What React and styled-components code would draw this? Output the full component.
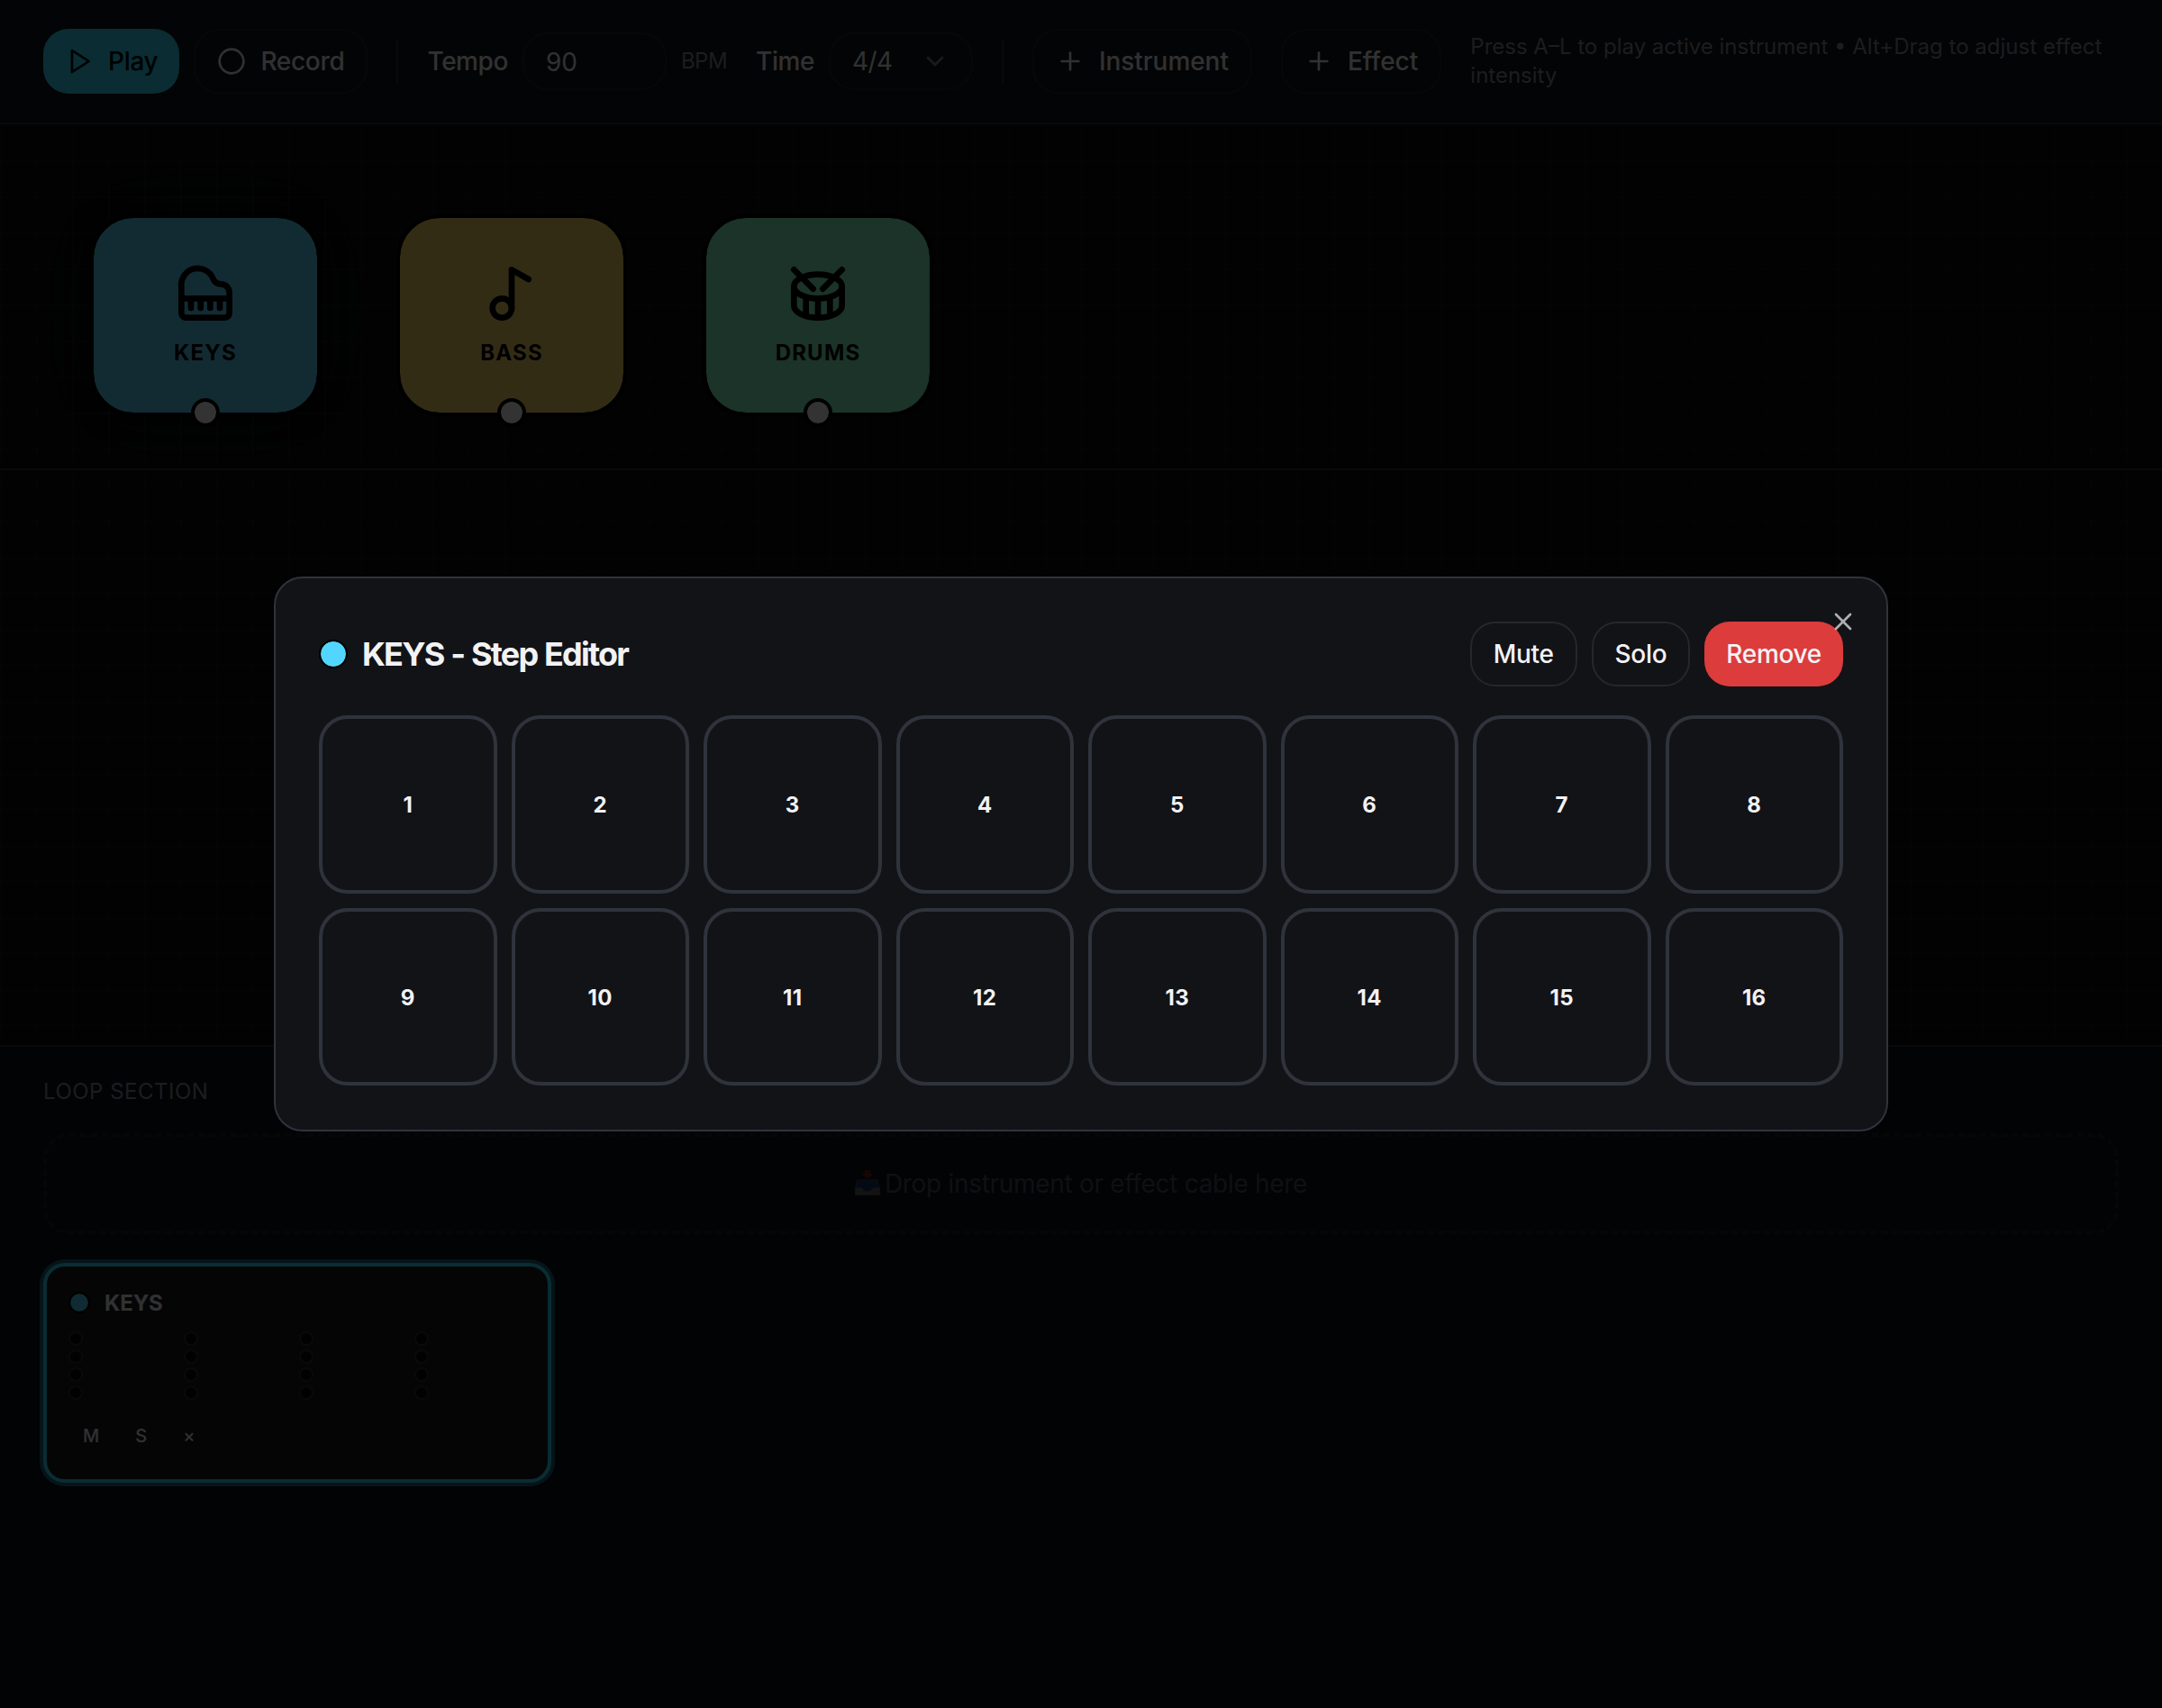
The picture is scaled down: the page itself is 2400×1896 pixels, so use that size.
import React from 'react';
import styled, { createGlobalStyle, css } from 'styled-components';

const GlobalStyle = createGlobalStyle`
  *, *::before, *::after { box-sizing: border-box; }
  html, body { margin: 0; padding: 0; background: #000; }
  body {
    font-family: Inter, 'Liberation Sans', sans-serif;
    font-size: 28px;
    line-height: 40px;
    color: #f2f2f4;
  }
  button, input { font-family: inherit; }
`;

const Page = styled.div`
  position: relative;
  width: 2400px;
  height: 1896px;
  overflow: hidden;
  display: flex;
  flex-direction: column;
  background: #0a0a0a;
`;

/* ---------- toolbar ---------- */

const Toolbar = styled.header`
  display: flex;
  align-items: center;
  gap: 32px;
  height: 138px;
  padding: 32px 48px;
  background: #0f151c;
  border-bottom: 2px solid #2b2e33;
  flex: none;
`;

const Group = styled.div`
  display: flex;
  align-items: center;
  gap: 16px;
  flex: none;
`;

const Button = styled.button`
  display: inline-flex;
  align-items: center;
  justify-content: center;
  gap: 16px;
  height: 72px;
  padding: 0 24px;
  border-radius: 28px;
  border: 2px solid #26272c;
  background: transparent;
  color: #f2f2f4;
  font-size: 28px;
  font-weight: 500;
  line-height: 40px;
  letter-spacing: ${(p) => p.$track ?? -0.3}px;
  white-space: nowrap;
  flex: none;
  ${(p) => p.$tone === 'primary' && css`
    border: 0;
    background: #33dcfa;
    color: #000508;
  `}
  ${(p) => p.$tone === 'danger' && css`
    border: 0;
    background: #dc3c3c;
  `}
`;

const Separator = styled.div`
  width: 2px;
  height: 48px;
  background: #2b2e33;
  flex: none;
`;

const Label = styled.span`
  font-weight: 500;
  letter-spacing: -0.45px;
`;

const Field = styled.input`
  width: 160px;
  height: 64px;
  padding: 2px 24px 0;
  border: 2px solid #26272c;
  border-radius: 28px;
  background: transparent;
  color: #f2f2f4;
  font-size: 28px;
`;

const SelectBox = styled.button`
  display: flex;
  align-items: center;
  justify-content: space-between;
  width: 160px;
  height: 64px;
  padding: 0 24px;
  border: 2px solid #26272c;
  border-radius: 28px;
  background: transparent;
  color: #f2f2f4;
  font-size: 28px;
  letter-spacing: -0.6px;
  svg { opacity: 0.5; }
`;

const Muted = styled.span`
  color: #8c8f94;
  font-size: 24px;
  line-height: 32px;
  letter-spacing: ${(p) => p.$track ?? 0}px;
`;

/* ---------- canvas ---------- */

const Canvas = styled.main`
  height: 1022px;
  flex: none;
  background-color: #0a0a0a;
  background-image:
    linear-gradient(to right, rgba(255, 255, 255, 0.03) 2px, transparent 2px),
    linear-gradient(to bottom, rgba(255, 255, 255, 0.03) 2px, transparent 2px);
  background-size: 40px 40px;
`;

const Rack = styled.section`
  display: flex;
  align-items: flex-start;
  gap: 84px;
  height: 384px;
  padding: 100px;
  border-bottom: 2px solid #2b2e33;
`;

const Instrument = styled.div`
  position: relative;
  display: flex;
  flex-direction: column;
  align-items: center;
  justify-content: center;
  gap: 16px;
  width: 256px;
  height: 224px;
  border: 4px solid #000;
  border-radius: 48px;
  background: ${(p) => p.$color};
  background-clip: padding-box;
  color: #000;
  ${(p) => p.$active && css`
    box-shadow: 0 0 24px rgba(0, 0, 0, 0.5), 0 0 80px rgba(51, 220, 250, 0.03);
  `}
`;

const InstrumentName = styled.span`
  padding-top: 2px;
  margin-bottom: -2px;
  font-size: 24px;
  line-height: 32px;
  font-weight: 700;
  letter-spacing: 1.2px;
`;

const Port = styled.span`
  position: absolute;
  left: 50%;
  bottom: -16px;
  width: 32px;
  height: 32px;
  margin-left: -16px;
  border: 4px solid #000;
  border-radius: 50%;
  background: #ffffff;
  background-clip: padding-box;
`;

/* ---------- loops ---------- */

const LoopSection = styled.section`
  display: flex;
  flex-direction: column;
  gap: 32px;
  flex: 1;
  padding: 32px 48px;
  background: #0a1119;
  border-top: 2px solid #2b2e33;
`;

const SectionTitle = styled.h3`
  margin: 0 0 -2px;
  padding-top: 2px;
  color: #8c8f94;
  font-size: 24px;
  line-height: 32px;
  font-weight: 400;
  letter-spacing: 0.5px;
`;

const DropZone = styled.div`
  display: flex;
  align-items: center;
  justify-content: center;
  gap: 5px;
  height: 112px;
  flex: none;
  border: 4px dashed #1e1f22;
  border-radius: 28px;
  color: #4e5156;
  letter-spacing: -0.3px;
`;

const TrackGrid = styled.div`
  display: grid;
  grid-template-columns: repeat(4, 1fr);
  gap: 16px;
`;

const TrackCard = styled.article`
  display: flex;
  flex-direction: column;
  gap: 16px;
  height: 244px;
  padding: 24px;
  border: 4px solid #33dcfa;
  border-radius: 24px;
  background: #1a1d22;
  box-shadow: 0 0 0 4px rgba(51, 220, 250, 0.42);
`;

const TrackHead = styled.div`
  display: flex;
  align-items: center;
  gap: 16px;
  height: 32px;
`;

const TrackName = styled.span`
  padding-top: 2px;
  font-size: 24px;
  line-height: 32px;
  font-weight: 700;
  letter-spacing: -0.1px;
`;

const Dot = styled.span`
  width: ${(p) => p.$size}px;
  height: ${(p) => p.$size}px;
  border: 2px solid #000;
  border-radius: 50%;
  background: #52d6ff;
  background-clip: padding-box;
  flex: none;
`;

const Pips = styled.div`
  display: grid;
  grid-template-columns: repeat(4, 1fr);
  gap: 4px;
`;

const Pip = styled.span`
  width: 16px;
  height: 16px;
  border: 2px solid #2b2e33;
  border-radius: 50%;
  background: #050505;
`;

const TrackActions = styled.div`
  display: flex;
  gap: 8px;
`;

const TinyButton = styled.button`
  height: 48px;
  padding: 0 16px;
  border: 0;
  background: transparent;
  color: #f2f2f4;
  font-size: 20px;
  font-weight: 500;
`;

/* ---------- dialog ---------- */

const Overlay = styled.div`
  position: absolute;
  inset: 0;
  display: flex;
  align-items: center;
  justify-content: center;
  background: rgba(0, 0, 0, 0.8);
`;

const Dialog = styled.div`
  position: relative;
  display: flex;
  flex-direction: column;
  gap: 32px;
  width: 1792px;
  height: 616px;
  padding: 48px;
  border: 2px solid #2f333b;
  border-radius: 32px;
  background: #121317;
`;

const DialogHead = styled.div`
  display: flex;
  align-items: center;
  justify-content: space-between;
`;

const DialogTitle = styled.h2`
  display: flex;
  align-items: center;
  gap: 16px;
  margin: 0;
  font-size: 36px;
  line-height: 36px;
  font-weight: 700;
  letter-spacing: -1.8px;
  word-spacing: 1px;
`;

const StepGrid = styled.div`
  display: grid;
  grid-template-columns: repeat(8, 1fr);
  gap: 16px;
`;

const Step = styled.button`
  aspect-ratio: 1;
  padding: 3px 0 0;
  border: 4px solid #2f333b;
  border-radius: 32px;
  background: transparent;
  color: #f2f2f4;
  font-size: 24px;
  line-height: 32px;
  font-weight: 700;
  letter-spacing: 0.4px;
`;

const CloseButton = styled.button`
  position: absolute;
  top: 32px;
  right: 32px;
  display: flex;
  padding: 0;
  border: 0;
  background: transparent;
  color: #f2f2f4;
  opacity: 0.7;
`;

/* ---------- icons ---------- */

const Icon = ({ size = 32, stroke = 2, children }) => (
  <svg
    width={size}
    height={size}
    viewBox="0 0 24 24"
    fill="none"
    stroke="currentColor"
    strokeWidth={stroke}
    strokeLinecap="round"
    strokeLinejoin="round"
  >
    {children}
  </svg>
);

const PlayIcon = () => <Icon><polygon points="6 3 20 12 6 21 6 3" /></Icon>;
const CircleIcon = () => <Icon><circle cx="12" cy="12" r="10" /></Icon>;
const PlusIcon = () => <Icon><path d="M5 12h14" /><path d="M12 5v14" /></Icon>;
const ChevronIcon = () => <Icon><path d="m6 9 6 6 6-6" /></Icon>;
const CloseIcon = () => <Icon><path d="M18 6 6 18" /><path d="m6 6 12 12" /></Icon>;

const PianoIcon = () => (
  <Icon size={64} stroke={2.5}>
    <path d="M18.5 8c-1.4 0-2.6-.8-3.2-2A6.87 6.87 0 0 0 2 9v11a2 2 0 0 0 2 2h16a2 2 0 0 0 2-2v-8.5C22 9.6 20.4 8 18.5 8" />
    <path d="M2 14h20" />
    <path d="M6 14v4" />
    <path d="M10 14v4" />
    <path d="M14 14v4" />
    <path d="M18 14v4" />
  </Icon>
);

const NoteIcon = () => (
  <Icon size={64} stroke={2.5}>
    <circle cx="8" cy="18" r="4" />
    <path d="M12 18V2l7 4" />
  </Icon>
);

const DrumIcon = () => (
  <Icon size={64} stroke={2.5}>
    <path d="m2 2 8 8" />
    <path d="m22 2-8 8" />
    <ellipse cx="12" cy="9" rx="10" ry="5" />
    <path d="M7 13.4v7.9" />
    <path d="M12 14v8" />
    <path d="M17 13.4v7.9" />
    <path d="M2 9v8a10 5 0 0 0 20 0V9" />
  </Icon>
);

const InboxTray = () => (
  <svg width="28" height="30" viewBox="0 0 28 30" opacity="0.6">
    <path d="M2.500 10.500h23l2.500 9v7.500a1 1 0 0 1-1 1H1a1 1 0 0 1-1-1v-7.500z" fill="#5d646b" />
    <path d="M3.500 11.500h21l2 8h-6l-3.500 4h-6l-3.500-4h-6z" fill="#1c4f8c" />
    <path d="M0.500 19.500h6.500c2 0 3 4 5 4h4c2 0 3-4 5-4h6.500v8h-27z" fill="#97999b" />
    <path d="M11 0h6v4h3.500L14 9.500 7.500 4H11z" fill="#b82416" />
  </svg>
);

const INSTRUMENTS = [
  { name: 'KEYS', color: '#5ad7fa', Glyph: PianoIcon, active: true },
  { name: 'BASS', color: '#ffdc69', Glyph: NoteIcon },
  { name: 'DRUMS', color: '#87ffcd', Glyph: DrumIcon },
];

const STEPS = Array.from({ length: 16 }, (_, i) => i + 1);

export default function App() {
  return (
    <Page>
      <GlobalStyle />
      <Toolbar>
        <Group>
          <Button $tone="primary"><PlayIcon />Play</Button>
          <Button><CircleIcon />Record</Button>
        </Group>
        <Separator />
        <Group>
          <Label>Tempo</Label>
          <Field defaultValue="90" />
          <Muted $track={-0.5}>BPM</Muted>
        </Group>
        <Group>
          <Label>Time</Label>
          <SelectBox>4/4<ChevronIcon /></SelectBox>
        </Group>
        <Separator />
        <Button $track={-0.05}><PlusIcon />Instrument</Button>
        <Button $track={0}><PlusIcon />Effect</Button>
        <Muted>Press A–L to play active instrument • Alt+Drag to adjust effect intensity</Muted>
      </Toolbar>

      <Canvas>
        <Rack>
          {INSTRUMENTS.map(({ name, color, Glyph, active }) => (
            <Instrument key={name} $color={color} $active={active}>
              <Glyph />
              <InstrumentName>{name}</InstrumentName>
              <Port />
            </Instrument>
          ))}
        </Rack>
      </Canvas>

      <LoopSection>
        <SectionTitle>LOOP SECTION</SectionTitle>
        <DropZone><InboxTray /><span>Drop instrument or effect cable here</span></DropZone>
        <TrackGrid>
          <TrackCard>
            <TrackHead><Dot $size={24} /><TrackName>KEYS</TrackName></TrackHead>
            <Pips>{STEPS.map((n) => <Pip key={n} />)}</Pips>
            <TrackActions>
              <TinyButton>M</TinyButton>
              <TinyButton>S</TinyButton>
              <TinyButton>×</TinyButton>
            </TrackActions>
          </TrackCard>
        </TrackGrid>
      </LoopSection>

      <Overlay>
        <Dialog>
          <DialogHead>
            <DialogTitle><Dot $size={32} />KEYS - Step Editor</DialogTitle>
            <Group>
              <Button>Mute</Button>
              <Button>Solo</Button>
              <Button $tone="danger">Remove</Button>
            </Group>
          </DialogHead>
          <StepGrid>
            {STEPS.map((n) => <Step key={n}>{n}</Step>)}
          </StepGrid>
          <CloseButton><CloseIcon /></CloseButton>
        </Dialog>
      </Overlay>
    </Page>
  );
}
